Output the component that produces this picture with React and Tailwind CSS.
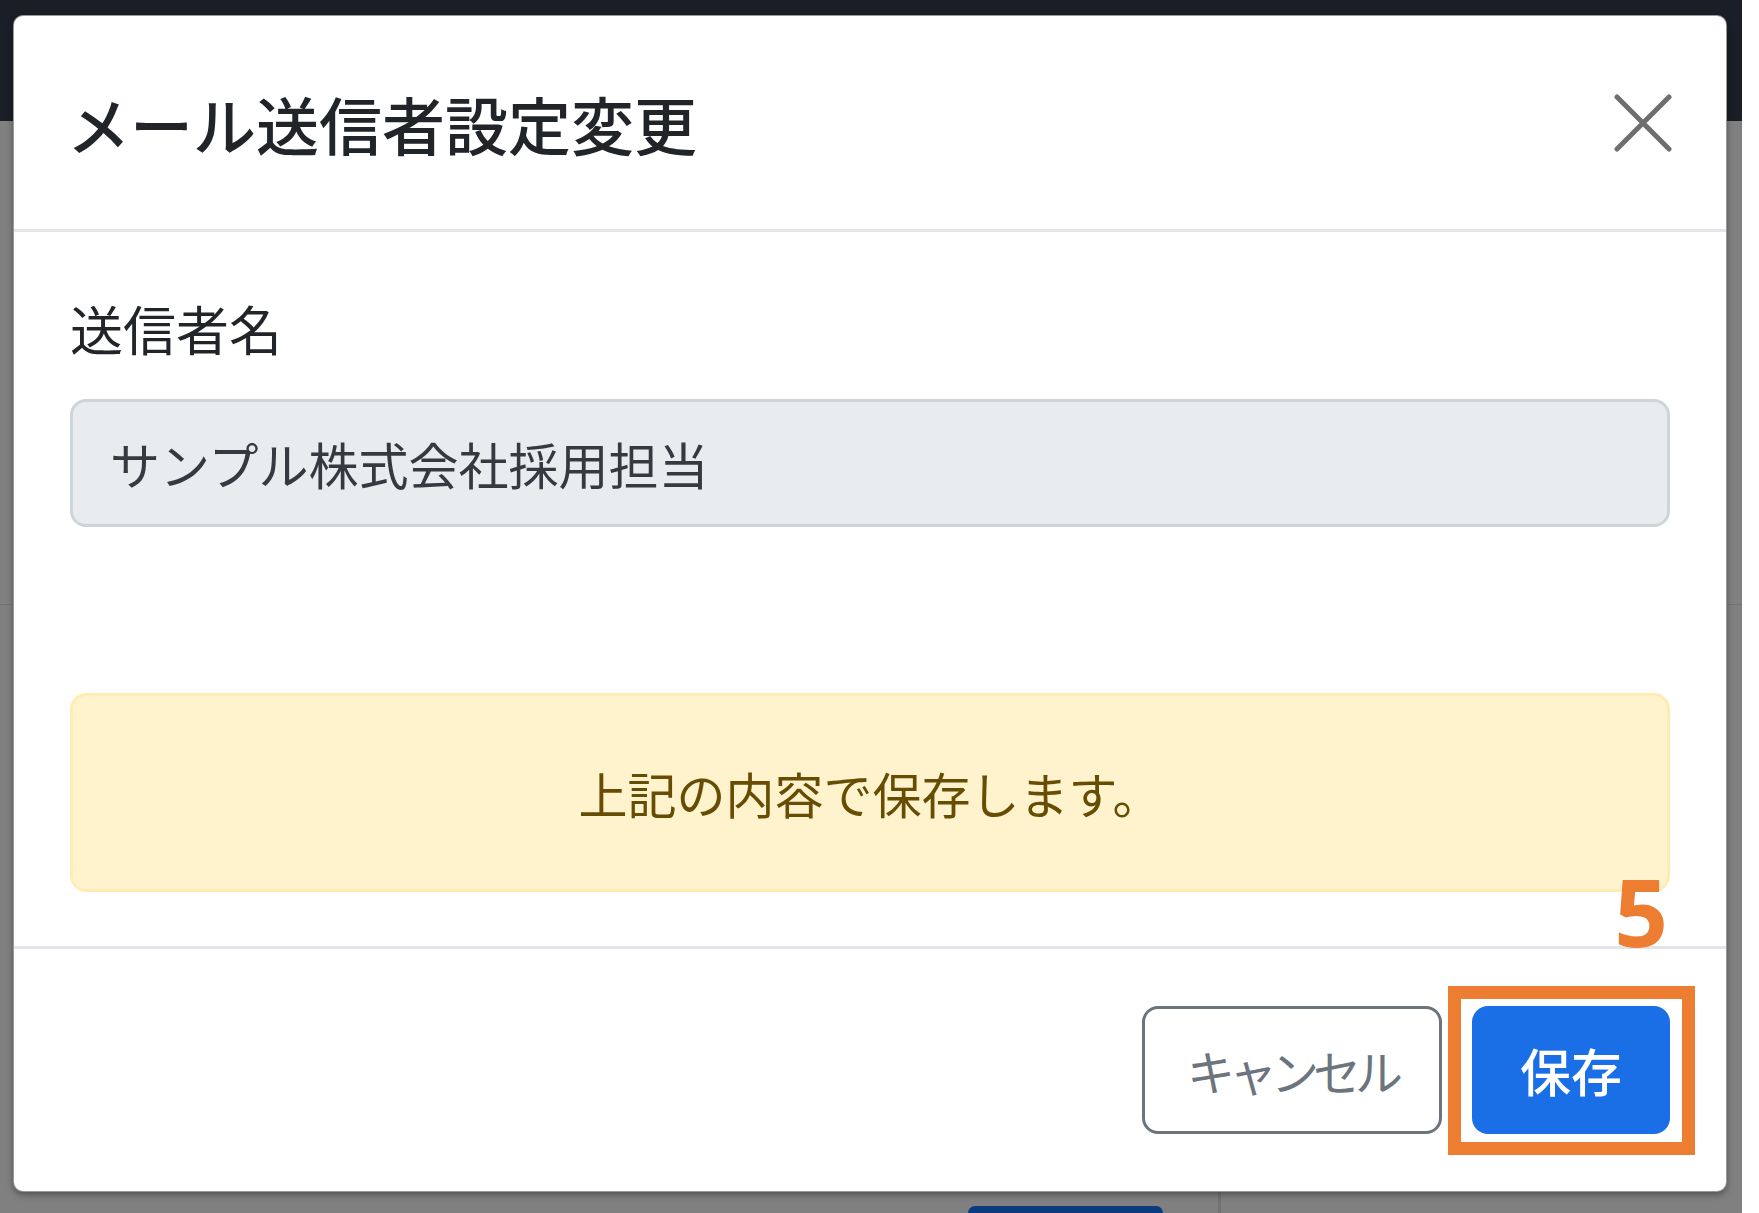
import React from 'react';

const CloseIcon = () => (
  <svg width="58" height="58" viewBox="0 0 58 58" fill="none">
    <path d="M3 3L55 55M55 3L3 55" stroke="#6f6f6f" strokeWidth="5" strokeLinecap="round" />
  </svg>
);

const App = () => {
  return (
    <div className="relative w-[1759px] h-[1213px] overflow-hidden bg-white font-['Noto_Sans_CJK_JP','Noto_Sans',sans-serif]">

      {/* Page behind the overlay */}
      <div className="flex h-full">
        <div className="flex-1 flex flex-col">
          <div className="h-[121px] bg-[#1a1f27]" />
          <div className="flex-1 bg-[#808080] flex flex-col">
            <div className="h-[484px] border-b border-[#737373]" />
            <div className="flex-1" />
            <div className="h-[21px] flex">
              <div className="w-[968px]" />
              <div className="w-[195px] mt-[14px] bg-[#0b3a7e] rounded-t-[8px]" />
              <div className="w-[58px] border-r-[3px] border-[#737373]" />
            </div>
          </div>
        </div>
        <div className="w-[17px] bg-white" />
      </div>

      {/* Modal */}
      <div className="absolute left-[13px] top-[15px] w-[1714px] h-[1177px] bg-white border border-black/40 rounded-[10px] shadow-[0_3px_6px_rgba(0,0,0,0.35)] flex flex-col">

        {/* Header */}
        <div className="h-[216px] shrink-0 flex items-center justify-between pl-[53px] pr-[54px] border-b-[3px] border-[#e2e5e9]">
          <h1 className="text-[63px] leading-none font-medium text-[#212529]">
            メール送信者設定変更
          </h1>
          <button type="button" className="flex items-center justify-center">
            <CloseIcon />
          </button>
        </div>

        {/* Body */}
        <div className="flex-1 flex flex-col px-[56px] pt-[56px]">
          <label className="text-[53px] leading-[80px] text-[#212529]">
            送信者名
          </label>
          <div className="mt-[31px] h-[128px] flex items-center px-[37px] bg-[#e9ecef] border-[3px] border-[#ced4da] rounded-[16px] text-[50px] text-[#343a40]">
            サンプル株式会社採用担当
          </div>
          <div className="mt-[166px] h-[199px] flex items-center justify-center bg-[#fff3cd] border-[3px] border-[#ffecb5] rounded-[16px] text-[49px] text-[#664d03]">
            上記の内容で保存します。
          </div>
        </div>

        {/* Footer */}
        <div className="h-[245px] shrink-0 border-t-[3px] border-[#e2e5e9] flex justify-end items-start pt-[57px] pr-[56px] gap-[30px]">
          <button
            type="button"
            className="w-[300px] h-[128px] flex items-center justify-center border-[3px] border-[#6c757d] rounded-[16px] text-[48px] text-[#6c757d] tracking-[-6px]"
          >
            キャンセル
          </button>
          <div className="relative">
            <button
              type="button"
              className="w-[198px] h-[128px] flex items-center justify-center bg-[#1a6fe6] rounded-[16px] text-[51px] font-medium text-white"
            >
              保存
            </button>
            <div className="absolute -left-[24px] -top-[20px] -right-[25px] -bottom-[21px] border-[13px] border-[#ed7d31] pointer-events-none" />
            <span className="absolute right-[2px] -top-[142px] text-[94px] leading-none font-bold text-[#ed7d31] font-['Noto_Sans',sans-serif]">
              5
            </span>
          </div>
        </div>
      </div>
    </div>
  );
};

export default App;
